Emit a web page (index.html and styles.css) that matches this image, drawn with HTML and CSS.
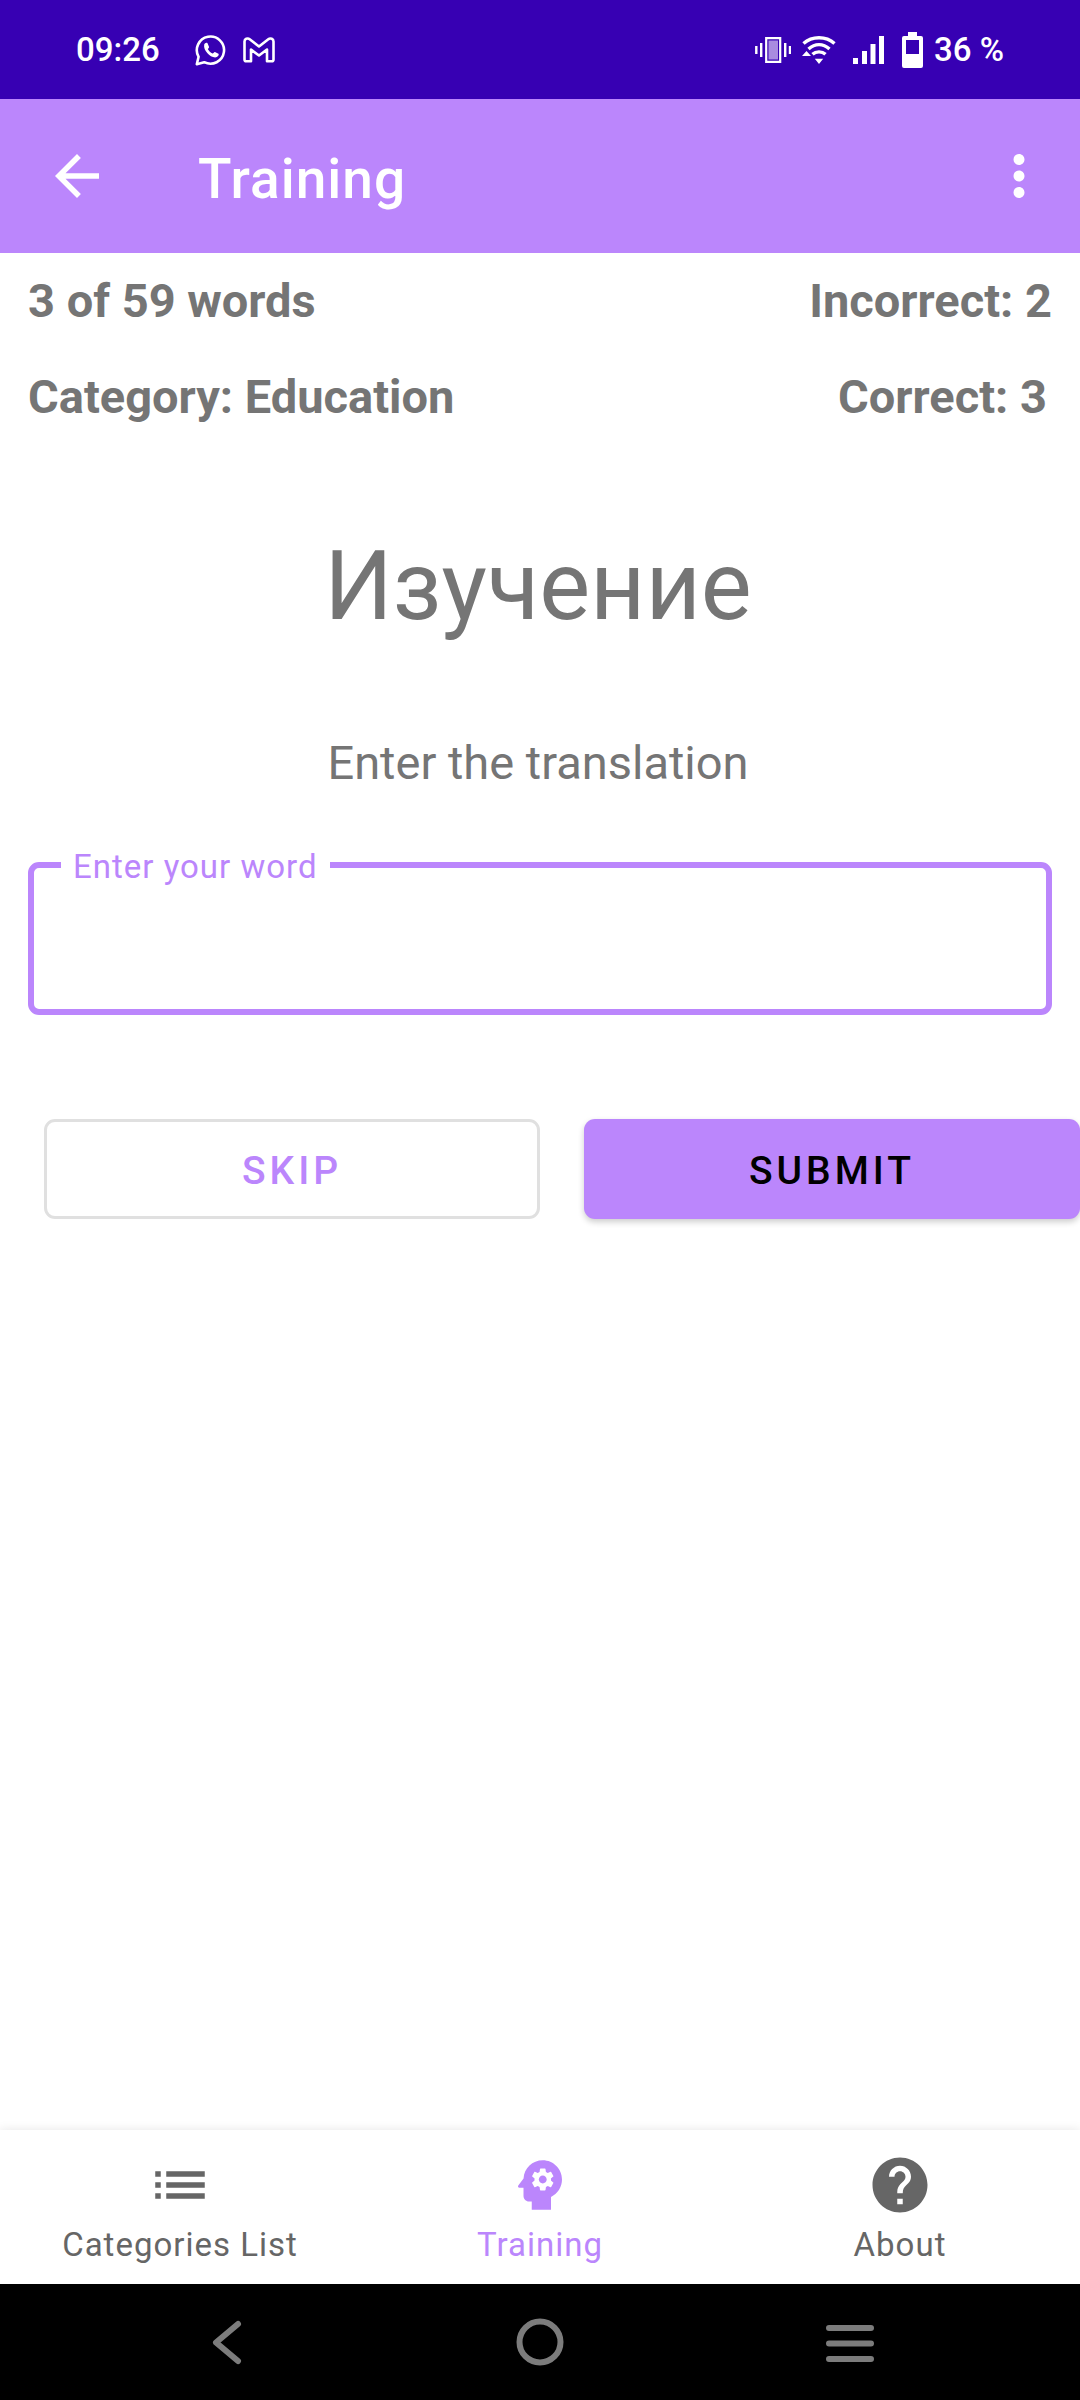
FILE: index.html
```html
<!DOCTYPE html>
<html lang="en">
<head>
<meta charset="utf-8">
<meta name="viewport" content="width=device-width, initial-scale=1">
<title>Training</title>
<link rel="stylesheet" href="styles.css">
</head>
<body>
<div class="status-bar">
  <div class="status-group status-left">
    <span class="status-text">09:26</span>
    <div class="status-icons">
      <svg width="32" height="32" viewBox="0 0 32 32" role="img" aria-label="WhatsApp"><path d="M3.6 22.8A13.6 13.6 0 1 1 9.2 28.2L1.8 30.2z" fill="none" stroke="#fff" stroke-width="2.6" stroke-linejoin="round"/><path d="M9.2 10.5c.6-1.6 2.4-2.4 3.2-1.4l1.7 3.8c.2.8-1.3 1.6-1.2 2.4 1.1 2 2.6 3.3 4.6 4.2.8.2 1.6-1.7 2.4-1.6l3.6 1.9c.7.6-.2 2.7-1.7 3.3-5.2 2-13.9-6.3-12.6-12.6z" fill="#fff"/></svg>
      <svg width="32" height="26" viewBox="0 0 32 26" role="img" aria-label="Gmail"><path d="M1.5 4.5C1.5 2 4.5 .5 6.7 2.2L16 9.5l9.3-7.3C27.5 .5 30.5 2 30.5 4.5V22.5q0 1.8-1.8 1.8H24V12.500l-8 6-8-6V24.300H3.300q-1.800 0-1.800-1.800z" fill="none" stroke="#fff" stroke-width="2.6" stroke-linejoin="round"/></svg>
    </div>
  </div>
  <div class="status-group status-right">
    <svg width="36" height="26" viewBox="0 0 36 26" role="img" aria-label="Vibrate"><path d="M11.2 1.2h14v23.6h-14z" fill="none" stroke="#fff" stroke-width="2.2"/><path d="M13.5 3.5h9.5v19h-9.5z" fill="#a98be0"/><path d="M1.3 9v8M6.2 6v14M30.2 6v14M35 9v8" stroke="#fff" stroke-width="2.4"/></svg>
    <svg width="34" height="28" viewBox="0 0 34 28" role="img" aria-label="Wi-Fi"><g fill="none" stroke="#fff" stroke-width="3.4"><path d="M1.5 7.5C10-.2 24-.2 32.5 7.5"/><path d="M6.5 13C13 7.2 21 7.2 27.5 13"/><path d="M10.5 18.3C14 15 20 15 23.5 18.3"/></g><path d="M0 20l4.5-5L9 20zM12.8 22.8h8.4L17 28z" fill="#fff"/></svg>
    <svg class="signal" width="32" height="28" viewBox="0 0 32 28" role="img" aria-label="Signal"><path d="M0 22h5v6H0zM9 15h5v13H9zM17.5 8h5v20h-5zM26 0h5v28h-5z" fill="#fff"/></svg>
    <svg width="21" height="36" viewBox="0 0 21 36" role="img" aria-label="Battery"><path fill-rule="evenodd" d="M6 0h9v4h4q2 0 2 2v28q0 2-2 2H2q-2 0-2-2V6q0-2 2-2h4zM4 8v14h13V8z" fill="#fff"/></svg>
    <span class="status-text">36 %</span>
  </div>
</div>

<header class="app-bar">
  <button class="icon-button" type="button" aria-label="Back"><svg class="icon" viewBox="0 0 24 24"><path d="M20 11H7.830l5.590-5.590L12 4l-8 8 8 8 1.410-1.410L7.830 13H20v-2z"/></svg></button>
  <h1 class="app-title">Training</h1>
  <button class="icon-button" type="button" aria-label="More options"><svg class="icon" viewBox="0 0 24 24"><path d="M12 8c1.100 0 2-.9 2-2s-.9-2-2-2-2 .9-2 2 .9 2 2 2zm0 2c-1.100 0-2 .9-2 2s.9 2 2 2 2-.9 2-2-.9-2-2-2zm0 6c-1.100 0-2 .9-2 2s.9 2 2 2 2-.9 2-2-.9-2-2-2z"/></svg></button>
</header>

<main class="content">
  <div class="stats">
    <div class="stats-row"><span>3 of 59 words</span><span>Incorrect: 2</span></div>
    <div class="stats-row stats-row-category"><span>Category: Education</span><span>Correct: 3</span></div>
  </div>
  <div class="question">
    <h2 class="word">Изучение</h2>
    <p class="prompt">Enter the translation</p>
  </div>
  <form class="answer">
    <div class="field">
      <input class="field-input" id="answer" type="text" autocomplete="off">
      <label class="field-label" for="answer">Enter your word</label>
    </div>
    <div class="actions">
      <button class="button button-outlined" type="button">SKIP</button>
      <button class="button button-filled" type="submit">SUBMIT</button>
    </div>
  </form>
</main>

<nav class="tabs" aria-label="Main">
  <a class="tab" href="#categories"><svg class="icon" viewBox="0 0 24 24"><path d="M3 13h2v-2H3v2zm0 4h2v-2H3v2zm0-8h2V7H3v2zm4 4h14v-2H7v2zm0 4h14v-2H7v2zM7 7v2h14V7H7z"/></svg><span>Categories List</span></a>
  <a class="tab tab-active" href="#training" aria-current="page"><svg class="icon" viewBox="0 0 24 24"><path d="M13 8.570c-.79 0-1.430.64-1.430 1.430s.64 1.430 1.430 1.430 1.430-.64 1.430-1.430-.64-1.430-1.430-1.430z"/><path d="M13 3C9.250 3 6.200 5.940 6.020 9.640L4.100 12.200c-.25.33-.01.8.4.8H6v3c0 1.100.9 2 2 2h1v3h7v-4.680c2.360-1.120 4-3.530 4-6.320 0-3.870-3.130-7-7-7zm3 7c0 .13-.01.26-.02.39l.83.66c.08.06.1.16.05.25l-.8 1.390c-.05.09-.16.12-.24.09l-.99-.4c-.21.16-.43.29-.67.39L14 13.830c-.01.1-.1.17-.2.17h-1.600c-.1 0-.18-.07-.2-.17l-.15-1.060c-.25-.1-.47-.23-.68-.39l-.99.4c-.09.03-.2 0-.25-.09l-.8-1.390c-.05-.08-.03-.19.05-.25l.84-.66c-.01-.13-.02-.26-.02-.39s.02-.27.04-.39l-.85-.66c-.08-.06-.1-.16-.05-.26l.8-1.380c.05-.09.15-.12.24-.09l1 .4c.2-.15.43-.29.67-.39L12 6.170c.02-.1.1-.17.2-.17h1.600c.1 0 .18.07.2.17l.15 1.060c.24.1.46.23.67.39l1-.4c.09-.03.2 0 .24.09l.8 1.380c.05.09.03.2-.05.26l-.85.66c.03.12.04.25.04.39z"/></svg><span>Training</span></a>
  <a class="tab" href="#about"><svg class="icon" viewBox="0 0 24 24"><path d="M12 2C6.480 2 2 6.480 2 12s4.480 10 10 10 10-4.480 10-10S17.520 2 12 2zm1 17h-2v-2h2v2zm2.070-7.750l-.9.920C13.450 12.900 13 13.500 13 15h-2v-.5c0-1.100.45-2.100 1.170-2.830l1.240-1.260c.37-.36.59-.86.59-1.410 0-1.100-.9-2-2-2s-2 .9-2 2H8c0-2.210 1.790-4 4-4s4 1.790 4 4c0 .88-.36 1.680-.93 2.250z"/></svg><span>About</span></a>
</nav>

<div class="system-nav">
  <button class="system-button" type="button" aria-label="System back"><svg width="48" height="48" viewBox="0 0 48 48"><path d="M32 6L10 24.500 32 43"/></svg></button>
  <button class="system-button" type="button" aria-label="Home"><svg width="48" height="48" viewBox="0 0 48 48"><circle cx="24" cy="24" r="20.500"/></svg></button>
  <button class="system-button" type="button" aria-label="Recent apps"><svg width="48" height="48" viewBox="0 0 48 48"><path d="M3 10h42M3 25.500h42M3 41h42"/></svg></button>
</div>
</body>
</html>
```
FILE: styles.css
```css
:root {
  --primary: #bb86fc;
  --primary-dark: #3700b3;
  --text: #757575;
  --muted: #666;
}

* {
  box-sizing: border-box;
}

body {
  margin: 0;
  min-height: 100vh;
  display: flex;
  flex-direction: column;
  background: #fff;
  color: var(--text);
  font-family: Roboto, "Noto Sans", sans-serif;
}

h1,
h2,
p {
  margin: 0;
}

button,
input {
  font: inherit;
}

svg {
  display: block;
}

/* Status bar */
.status-bar {
  display: flex;
  justify-content: space-between;
  align-items: center;
  min-height: 99px;
  padding: 0 76px;
  background: var(--primary-dark);
}

.status-group,
.status-icons {
  display: flex;
  align-items: center;
}

.status-left {
  gap: 35px;
}

.status-icons {
  gap: 16px;
}

.status-right {
  gap: 11px;
}

.signal {
  margin: 0 6px;
}

.status-text {
  padding-top: 1px;
  color: #fff;
  font-size: 33px;
  font-weight: 500;
  line-height: 40px;
}

/* App bar */
.app-bar {
  display: flex;
  align-items: center;
  min-height: 154px;
  padding: 0 28px 0 44px;
  background: var(--primary);
}

.icon-button {
  padding: 0;
  border: 0;
  background: none;
  color: #fff;
}

.icon {
  width: 66px;
  height: 66px;
  fill: currentColor;
}

.app-title {
  flex: 1;
  padding: 6px 0 0 88px;
  color: #fff;
  font-size: 55px;
  font-weight: 500;
  line-height: 64px;
  letter-spacing: 1px;
}

/* Training screen */
.content {
  flex: 1;
  padding-top: 20px;
}

.stats {
  display: grid;
  gap: 40px;
  font-size: 47px;
  font-weight: 700;
  line-height: 56px;
}

.stats-row {
  display: flex;
  justify-content: space-between;
  padding: 0 28px;
}

.stats-row-category {
  padding-right: 33px;
}

.question {
  display: grid;
  gap: 93px;
  padding: 105px 32px 0 28px;
  text-align: center;
}

.word {
  font-size: 96px;
  font-weight: 400;
  line-height: 112px;
}

.prompt {
  font-size: 47px;
  line-height: 56px;
}

.field {
  position: relative;
  margin: 71px 28px 0;
}

.field-input {
  display: block;
  width: 100%;
  height: 153px;
  padding: 0 38px;
  border: 6px solid var(--primary);
  border-radius: 11px;
  outline: 0;
  background: transparent;
  color: #212121;
  font-size: 44px;
}

.field-label {
  position: absolute;
  top: -15px;
  left: 33px;
  padding: 0 12px;
  background: #fff;
  color: var(--primary);
  font-size: 33px;
  line-height: 40px;
  letter-spacing: 1px;
}

.actions {
  display: grid;
  grid-template-columns: 1fr 1fr;
  gap: 44px;
  margin-top: 104px;
  padding-left: 44px;
}

.button {
  height: 100px;
  padding: 3px 0 0;
  border: 0;
  border-radius: 11px;
  font-size: 39px;
  font-weight: 500;
  letter-spacing: 4px;
}

.button-outlined {
  border: 3px solid #e0e0e0;
  background: #fff;
  color: var(--primary);
}

.button-filled {
  background: var(--primary);
  box-shadow: 0 3px 6px rgba(0, 0, 0, 0.2);
  color: #000;
}

/* Bottom navigation */
.tabs {
  display: grid;
  grid-template-columns: repeat(3, 1fr);
  min-height: 154px;
  background: #fff;
  box-shadow: 0 0 10px rgba(0, 0, 0, 0.1);
}

.tab {
  display: flex;
  flex-direction: column;
  align-items: center;
  gap: 7px;
  padding-top: 22px;
  color: var(--muted);
  font-size: 33px;
  line-height: 40px;
  letter-spacing: 1px;
  text-decoration: none;
}

.tab-active {
  color: var(--primary);
}

/* System navigation */
.system-nav {
  z-index: 1;
  display: flex;
  justify-content: center;
  align-items: center;
  gap: 262px;
  min-height: 116px;
  background: #000;
}

.system-button {
  padding: 0;
  border: 0;
  background: none;
}

.system-button svg {
  fill: none;
  stroke: #7c7c7c;
  stroke-width: 6;
  stroke-linecap: round;
  stroke-linejoin: round;
}
```
